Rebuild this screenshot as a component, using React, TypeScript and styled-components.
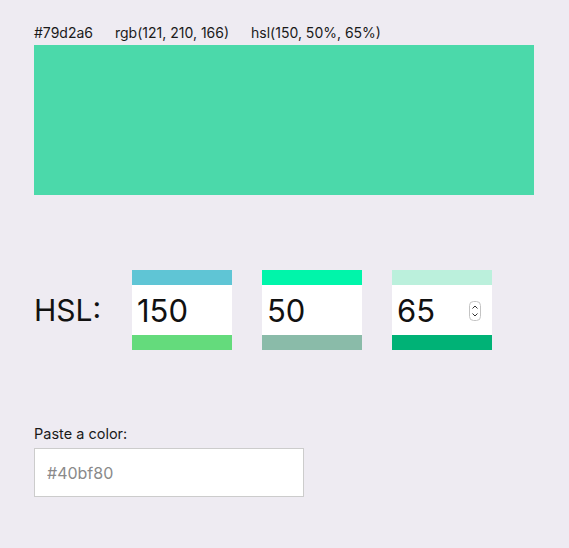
import React from 'react';
import styled, { createGlobalStyle } from 'styled-components';

const GlobalStyle = createGlobalStyle`
  html, body {
    margin: 0;
    padding: 0;
    background: #eeebf2;
  }
  body {
    font-family: Inter, "Noto Sans", sans-serif;
    color: #111;
  }
`;

const Page = styled.div`
  padding: 23px 34px 40px;
  min-height: 548px;
  box-sizing: border-box;
`;

const InfoRow = styled.div`
  display: flex;
  gap: 22px;
  font-size: 14px;
  line-height: 19px;
  color: #1a1a1a;
`;

const Swatch = styled.div<{ $color: string }>`
  width: 500px;
  height: 150px;
  margin-top: 3px;
  background: ${p => p.$color};
`;

const HslRow = styled.div`
  display: flex;
  align-items: center;
  margin-top: 75px;
`;

const HslLabel = styled.div`
  width: 98px;
  font-size: 30px;
  color: #111;
`;

const Channels = styled.div`
  display: flex;
  gap: 30px;
`;

const Channel = styled.div`
  position: relative;
  width: 100px;
  display: flex;
  flex-direction: column;
`;

const Bar = styled.div<{ $color: string }>`
  height: 15px;
  background: ${p => p.$color};
`;

const NumberInput = styled.input`
  height: 50px;
  width: 100%;
  box-sizing: border-box;
  border: none;
  outline: none;
  padding: 0 0 0 5px;
  margin: 0;
  font-family: Inter, "Noto Sans", sans-serif;
  font-size: 31px;
  color: #111;
  background: #fff;
  -moz-appearance: textfield;
  &::-webkit-inner-spin-button,
  &::-webkit-outer-spin-button {
    -webkit-appearance: none;
    margin: 0;
  }
`;

const Spinner = styled.svg`
  position: absolute;
  right: 11px;
  top: 31px;
`;

const PasteSection = styled.div`
  margin-top: 75px;
  display: flex;
  flex-direction: column;
  gap: 5px;
`;

const PasteLabel = styled.label`
  font-size: 14.5px;
  line-height: 18px;
  color: #1a1a1a;
`;

const PasteInput = styled.input`
  width: 270px;
  height: 49px;
  box-sizing: border-box;
  border: 1px solid #cccccc;
  padding: 0 12px;
  font-family: Inter, "Noto Sans", sans-serif;
  font-size: 16px;
  background: #fff;
  outline: none;
  &::placeholder {
    color: #8a8a8a;
  }
`;

const channels = [
  { value: 150, top: '#5fc5d5', bottom: '#64db7c' },
  { value: 50, top: '#00f5aa', bottom: '#8abba9' },
  { value: 65, top: '#bbf0dc', bottom: '#00b276', spinner: true },
];

const App: React.FC = () => {
  return (
    <>
      <GlobalStyle />
      <Page>
        <InfoRow>
          <span>#79d2a6</span>
          <span>rgb(121, 210, 166)</span>
          <span>hsl(150, 50%, 65%)</span>
        </InfoRow>
        <Swatch $color="#4bd9aa" />

        <HslRow>
          <HslLabel>HSL:</HslLabel>
          <Channels>
            {channels.map((c, i) => (
              <Channel key={i}>
                <Bar $color={c.top} />
                <NumberInput type="number" defaultValue={c.value} />
                <Bar $color={c.bottom} />
                {c.spinner && (
                  <Spinner width="12" height="20" viewBox="0 0 12 20">
                    <rect x="0.5" y="0.5" width="11" height="19" rx="4" fill="#fff" stroke="#c4c4c4" />
                    <path d="M3.5 7.5 L6 5 L8.5 7.5" fill="none" stroke="#333" strokeWidth="1" />
                    <path d="M3.5 12.5 L6 15 L8.5 12.5" fill="none" stroke="#333" strokeWidth="1" />
                  </Spinner>
                )}
              </Channel>
            ))}
          </Channels>
        </HslRow>

        <PasteSection>
          <PasteLabel htmlFor="paste">Paste a color:</PasteLabel>
          <PasteInput id="paste" placeholder="#40bf80" />
        </PasteSection>
      </Page>
    </>
  );
};

export default App;
